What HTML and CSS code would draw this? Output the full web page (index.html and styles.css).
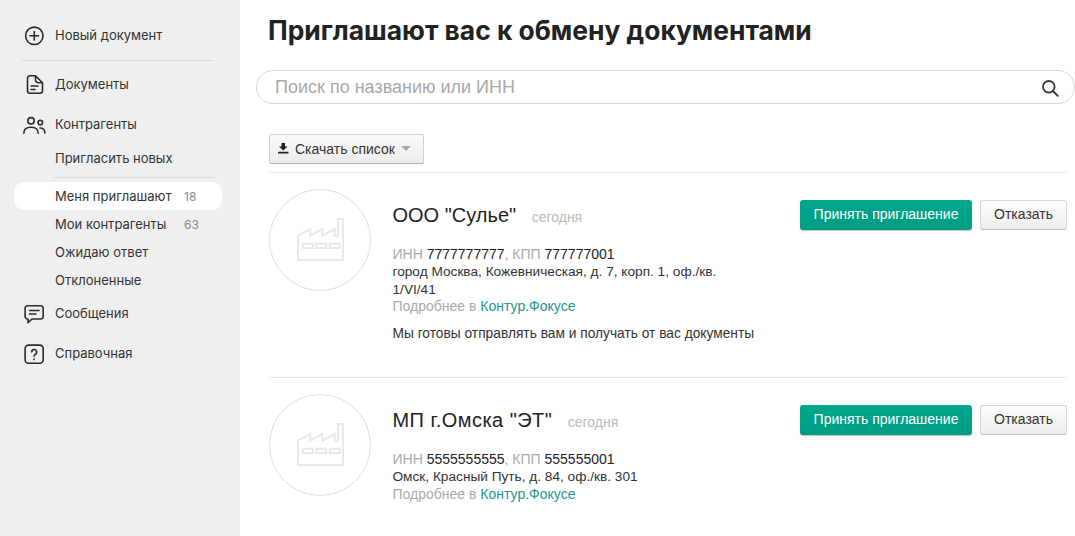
FILE: index.html
```html
<!DOCTYPE html>
<html lang="ru">
<head>
<meta charset="utf-8">
<title>Контрагенты</title>
<link rel="stylesheet" href="styles.css">
</head>
<body>
<div class="app">
  <aside class="sidebar">
    <a class="nav-item new-doc">
      <svg class="icon" viewBox="0 0 24 24"><circle cx="12.3" cy="12.8" r="8.7"/><path d="M12.3 8.5v8.6M8 12.8h8.6"/></svg>
      <span>Новый документ</span>
    </a>
    <div class="divider"></div>
    <a class="nav-item docs">
      <svg class="icon" viewBox="0 0 24 24"><path d="M8 3.800h5.500l7 7v7.900a2.500 2.500 0 0 1-2.500 2.500H8a2.500 2.500 0 0 1-2.500-2.500V6.300A2.500 2.500 0 0 1 8 3.800zM13.500 3.800v4a3 3 0 0 0 3 3h4M9 14h7M9 17.500h4"/></svg>
      <span>Документы</span>
    </a>
    <a class="nav-item partners">
      <svg class="icon" viewBox="0 0 24 24"><circle cx="9" cy="8.800" r="3.200"/><circle cx="18.300" cy="10.500" r="2.300"/><path d="M1.800 21.200c0-4 3-6 7.200-6s7.200 2 7.200 6M18 16c2.800 0 4.800 1.700 4.800 5"/></svg>
      <span>Контрагенты</span>
    </a>
    <a class="sub-item invite">Пригласить новых</a>
    <div class="divider sub-divider"></div>
    <a class="sub-item active"><span class="sub-label">Меня приглашают</span><span class="count">18</span></a>
    <a class="sub-item"><span class="sub-label">Мои контрагенты</span><span class="count">63</span></a>
    <a class="sub-item">Ожидаю ответ</a>
    <a class="sub-item">Отклоненные</a>
    <a class="nav-item messages">
      <svg class="icon" viewBox="0 0 24 24"><path d="M5.500 4.800h13.300a2.400 2.400 0 0 1 2.400 2.400v8.400a2.400 2.400 0 0 1-2.400 2.400H10l-4 3.700V18h-.5a2.400 2.400 0 0 1-2.400-2.400V7.200a2.400 2.400 0 0 1 2.400-2.400zM7.500 9.500H17M7.500 13H14"/></svg>
      <span>Сообщения</span>
    </a>
    <a class="nav-item help">
      <svg class="icon" viewBox="0 0 24 24"><rect x="3.100" y="4.100" width="18.100" height="18.100" rx="3.500"/><path d="M9.700 11a2.500 2.500 0 1 1 3.700 2.200c-.9.500-1.300 1-1.300 2M12.100 18v.6"/></svg>
      <span>Справочная</span>
    </a>
  </aside>
  <main class="content">
    <h1 class="title">Приглашают вас к обмену документами</h1>
    <div class="search">
      <span class="search-placeholder">Поиск по названию или ИНН</span>
      <svg class="search-icon" viewBox="0 0 18 18"><circle cx="7.800" cy="7.800" r="5.800"/><path d="M12 12l4.800 4.800"/></svg>
    </div>
    <div class="toolbar">
      <button class="download">
        <svg class="download-icon" viewBox="0 0 12 12"><path d="M4 0h4v4h3L6 8.500 1 4h3zM0 10h12v2H0z"/></svg>
        <span>Скачать список</span>
        <i class="caret"></i>
      </button>
    </div>
    <article class="card first">
      <div class="avatar">
        <svg viewBox="0 0 47 44"><path d="M1 43V18.700L13.300 12v6.700L25.300 12v6.700L37.700 12v6.700H41V2h5v41zM6 26.700h10v4.300H6zM19.300 26.700h10v4.300h-10zM32.700 26.700h10v4.300h-10z"/></svg>
      </div>
      <div class="info">
        <div class="name-row"><span class="name">ООО "Сулье"</span><span class="date">сегодня</span></div>
        <div class="details">
          <div><span class="muted">ИНН</span> 7777777777<span class="muted">, КПП</span> 777777001</div>
          <div class="address">город Москва, Кожевническая, д. 7, корп. 1, оф./кв. 1/VI/41</div>
          <div class="muted">Подробнее в <a class="link">Контур.Фокусе</a></div>
        </div>
        <p class="note">Мы готовы отправлять вам и получать от вас документы</p>
      </div>
      <div class="actions">
        <button class="accept">Принять приглашение</button>
        <button class="decline">Отказать</button>
      </div>
    </article>
    <article class="card">
      <div class="avatar">
        <svg viewBox="0 0 47 44"><path d="M1 43V18.700L13.300 12v6.700L25.300 12v6.700L37.700 12v6.700H41V2h5v41zM6 26.700h10v4.300H6zM19.300 26.700h10v4.300h-10zM32.700 26.700h10v4.300h-10z"/></svg>
      </div>
      <div class="info">
        <div class="name-row"><span class="name name-wide">МП г.Омска "ЭТ"</span><span class="date">сегодня</span></div>
        <div class="details">
          <div><span class="muted">ИНН</span> 5555555555<span class="muted">, КПП</span> 555555001</div>
          <div class="address">Омск, Красный Путь, д. 84, оф./кв. 301</div>
          <div class="muted">Подробнее в <a class="link">Контур.Фокусе</a></div>
        </div>
      </div>
      <div class="actions">
        <button class="accept">Принять приглашение</button>
        <button class="decline">Отказать</button>
      </div>
    </article>
  </main>
</div>
</body>
</html>
```
FILE: styles.css
```css
* { box-sizing: border-box; }
html, body { margin: 0; height: 100%; overflow: hidden; background: #fff; }
body { font-family: "Liberation Sans", Arial, sans-serif; color: #222; }
.app { display: flex; height: 536px; overflow: hidden; }

.sidebar {
  width: 240px;
  flex: none;
  background: #efefef;
  padding-top: 21px;
  font-family: Inter, "Noto Sans", sans-serif;
  font-size: 13px;
  color: #333;
}
.nav-item { display: flex; align-items: center; height: 28px; padding-left: 22px; gap: 9px; }
.icon { width: 24px; height: 24px; flex: none; fill: none; stroke: #2b2b2b; stroke-width: 1.6; stroke-linecap: round; stroke-linejoin: round; }
.divider { height: 1px; background: #dcdcdc; margin: 11px 26px 0 22px; }
.docs { margin-top: 9px; }
.partners { margin-top: 12px; }
.sub-item { display: flex; align-items: center; height: 28px; padding-left: 55px; }
.invite { margin-top: 6px; }
.sub-divider { margin: 5px 26px 0 54px; }
.active { background: #fff; border-radius: 10px; margin: 4px 18px 0 14px; padding-left: 41px; }
.sub-label { width: 129px; flex: none; white-space: nowrap; }
.count { font-size: 12px; color: #8a8a8a; }
.messages { margin-top: 5px; }
.help { margin-top: 12px; }

.content { flex: 1; padding: 0 8px 0 16px; min-width: 0; }
.title { margin: 0 0 0 12px; padding-top: 14px; height: 70px; font-family: Inter, sans-serif; font-size: 26.4px; line-height: 33px; font-weight: 700; color: #222; white-space: nowrap; }
.search { display: flex; align-items: center; justify-content: space-between; height: 34px; border: 1px solid #d8d8d8; border-radius: 17px; padding: 0 15px 0 18px; margin-right: -8px; }
.search-placeholder { font-size: 18px; color: #a9a9a9; }
.search-icon { width: 18px; height: 18px; fill: none; stroke: #333; stroke-width: 1.8; stroke-linecap: round; margin-top: 2px; }

.toolbar { padding: 30px 0 8px 13px; }
.download { display: flex; align-items: center; height: 30px; width: 155px; padding: 0 0 1px 8px; border: 1px solid #d0d0d0; border-bottom-color: #b5b5b5; border-radius: 2px; background: linear-gradient(#fafafa, #ececec); font: 14px "Liberation Sans", sans-serif; color: #333; }
.download-icon { width: 10.5px; height: 10.5px; fill: #222; margin-right: 6.5px; }
.caret { border: 5px solid transparent; border-top: 5px solid #a8a8a8; border-bottom: 0; margin-left: 6px; }

.card { display: flex; margin-left: 13px; border-top: 1px solid #e6e6e6; padding: 16px 0; }
.first { height: 205px; }
.avatar { width: 102px; height: 102px; flex: none; border: 1px solid #dedede; border-radius: 50%; display: flex; align-items: center; justify-content: center; padding-bottom: 2px; }
.avatar svg { width: 47px; height: 44px; fill: none; stroke: #e8e8e8; stroke-width: 2; }
.info { width: 330px; flex: none; margin-left: 21.5px; font-size: 14px; line-height: 17.3px; color: #222; }
.name-row { display: flex; align-items: baseline; margin-top: 12px; height: 34px; }
.name { font-size: 20px; line-height: 28px; color: #222; }
.name-wide { letter-spacing: .45px; }
.date { margin-left: 15.5px; font-size: 14px; color: #bbb; }
.details { margin-top: 11px; }
.muted { color: #aaa; }
.address { color: #333; font-size: 13.67px; }
.link { color: #1a9a8c; }
.note { margin: 10px 0 0; font-size: 13.75px; color: #333; white-space: nowrap; }
.actions { display: flex; gap: 8px; margin-left: auto; padding-top: 11px; align-items: flex-start; }
.accept, .decline { height: 30px; padding: 0 0 2px; border-radius: 3px; font: 14px "Liberation Sans", sans-serif; }
.accept { width: 172px; border: 0; background: linear-gradient(#00a88c, #009c83); color: #fff; box-shadow: 0 1px 1px rgba(0,0,0,.25); }
.decline { width: 87px; border: 1px solid #d8d8d8; border-bottom-color: #bbb; background: linear-gradient(#fdfdfd, #ececec); color: #333; }
```
